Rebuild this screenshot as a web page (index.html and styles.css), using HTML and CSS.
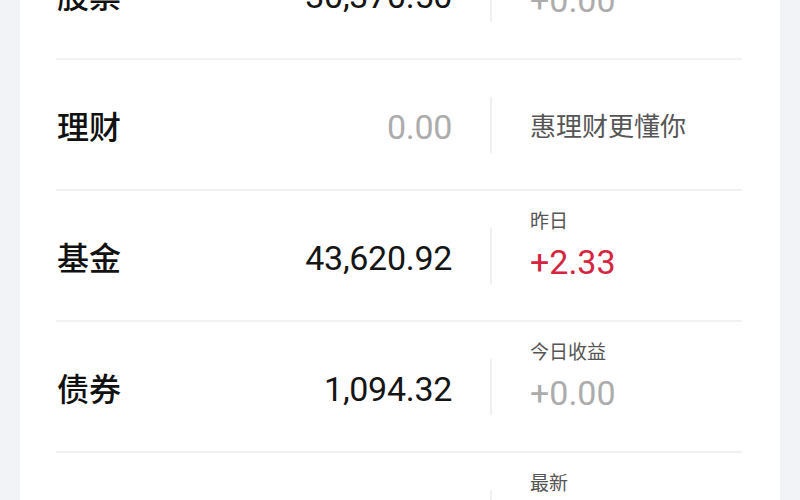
FILE: index.html
```html
<!DOCTYPE html>
<html lang="zh-CN">
<head>
<meta charset="utf-8">
<title>资产</title>
<link rel="stylesheet" href="styles.css">
</head>
<body>
<div class="card">
  <div class="row">
    <div class="main">
      <span class="name">股票</span>
      <span class="amount">30,370.50</span>
    </div>
    <div class="divider"></div>
    <div class="side">
      <span class="label">今日盈亏</span>
      <span class="value muted">+0.00</span>
    </div>
  </div>
  <div class="row">
    <div class="main">
      <span class="name">理财</span>
      <span class="amount muted">0.00</span>
    </div>
    <div class="divider"></div>
    <div class="side single">
      <span class="slogan">惠理财更懂你</span>
    </div>
  </div>
  <div class="row">
    <div class="main">
      <span class="name">基金</span>
      <span class="amount">43,620.92</span>
    </div>
    <div class="divider"></div>
    <div class="side">
      <span class="label">昨日</span>
      <span class="value up">+2.33</span>
    </div>
  </div>
  <div class="row">
    <div class="main">
      <span class="name">债券</span>
      <span class="amount">1,094.32</span>
    </div>
    <div class="divider"></div>
    <div class="side">
      <span class="label">今日收益</span>
      <span class="value muted">+0.00</span>
    </div>
  </div>
  <div class="row">
    <div class="main">
      <span class="name">黄金</span>
      <span class="amount">0.00</span>
    </div>
    <div class="divider"></div>
    <div class="side">
      <span class="label">最新</span>
      <span class="value">386.52</span>
    </div>
  </div>
</div>
</body>
</html>
```

FILE: styles.css
```css
html, body {
  margin: 0;
  padding: 0;
  background: #f2f3f7;
  height: 100%;
  overflow: hidden;
}

body {
  font-family: "Noto Sans CJK SC", "Noto Sans", sans-serif;
  color: #111;
}

.card {
  margin: -71px 20px 0;
  background: #fff;
}

.row {
  margin: 0 38px 0 36px;
  height: 131px;
  box-sizing: border-box;
  border-bottom: 2px solid #f1f1f1;
  display: grid;
  grid-template-columns: 396px 78px 1fr;
  align-items: center;
}

.main {
  display: flex;
  align-items: center;
  justify-content: space-between;
}

.name {
  font-size: 32px;
  font-weight: 500;
  line-height: 40px;
  padding-left: 1px;
}

.amount {
  font-family: "Roboto", "Liberation Sans", sans-serif;
  font-size: 34px;
  line-height: 40px;
  color: #151515;
  letter-spacing: -0.3px;
  padding-top: 4px;
}

.divider {
  justify-self: center;
  width: 2px;
  height: 56px;
  background: #f0f0f0;
}

.side {
  display: flex;
  flex-direction: column;
  align-items: flex-start;
  padding-bottom: 25px;
}

.side.single {
  padding-bottom: 0;
}

.label {
  font-size: 19px;
  line-height: 26px;
  margin-bottom: 11px;
  color: #555;
}

.value {
  font-family: "Roboto", "Liberation Sans", sans-serif;
  font-size: 34px;
  line-height: 36px;
  color: #151515;
}

.slogan {
  font-size: 26px;
  line-height: 34px;
  color: #555;
}

.muted {
  color: #acacac;
}

.up {
  color: #d4243f;
}
```
